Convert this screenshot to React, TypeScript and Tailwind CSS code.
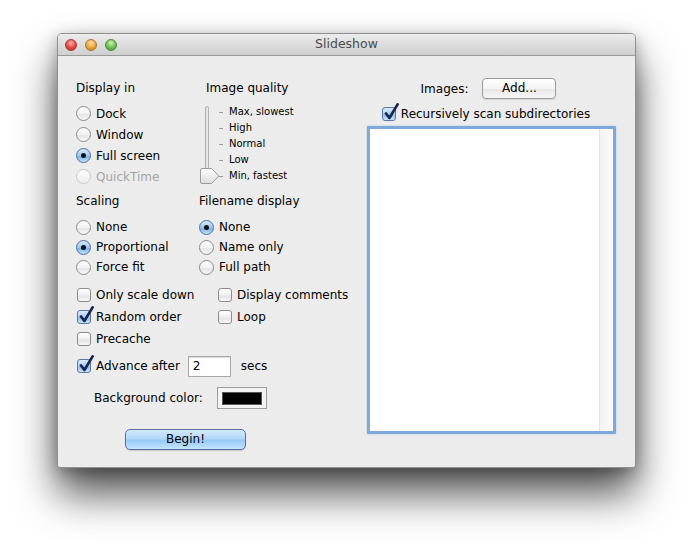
import React from "react";

function Radio({ label, checked, disabled }: { label: string; checked?: boolean; disabled?: boolean }) {
  return (
    <div className="flex items-center gap-[5px]">
      <span
        className={
          "w-[15px] h-[15px] rounded-full flex items-center justify-center border " +
          (checked
            ? "border-[#4f6da0] bg-[linear-gradient(#dbeafb,#9cc6f0_50%,#7fb4ea_60%,#c4e1fb)]"
            : disabled
            ? "border-[#c8c8c8] bg-[linear-gradient(#fbfbfb,#efefef)]"
            : "border-[#8a8a8a] bg-[linear-gradient(#ffffff,#f2f2f2_50%,#e4e4e4_60%,#fafafa)]")
        }
      >
        {checked && <span className="w-[5px] h-[5px] rounded-full bg-[#111]" />}
      </span>
      <span className={disabled ? "text-[#a4a4a4]" : "text-black"}>{label}</span>
    </div>
  );
}

function Check({ label, checked }: { label: string; checked?: boolean }) {
  return (
    <div className="flex items-center gap-[5px]">
      <span
        className={
          "relative w-[14px] h-[14px] rounded-[3px] border " +
          (checked
            ? "border-[#5b78a8] bg-[linear-gradient(#dcebfb,#a9cdf2_50%,#93bfec_60%,#cde5fb)]"
            : "border-[#8c8c8c] bg-[linear-gradient(#ffffff,#f0f0f0_50%,#e4e4e4_60%,#f8f8f8)]")
        }
      >
        {checked && (
          <svg className="absolute left-[1px] -top-[5px] w-[15px] h-[18px]" viewBox="0 0 15 18">
            <path d="M2 10.5 L5.4 15 L13.6 1.4" fill="none" stroke="#1b2552" strokeWidth={2.7} strokeLinecap="round" strokeLinejoin="round" />
          </svg>
        )}
      </span>
      <span>{label}</span>
    </div>
  );
}

function QualitySlider() {
  const levels = ["Max, slowest", "High", "Normal", "Low", "Min, fastest"];
  return (
    <div className="flex mt-[8px]">
      <div className="relative w-[19px] h-[80px]">
        <div className="absolute left-[5px] top-[2px] w-[4px] h-[72px] rounded-full border border-[#b4b4b4] bg-[linear-gradient(90deg,#d6d6d6,#f4f4f4)]" />
        <svg className="absolute left-0 top-[64px] w-[20px] h-[16px]" viewBox="0 0 20 16">
          <defs>
            <linearGradient id="thumb" x1="0" y1="0" x2="0" y2="1">
              <stop offset="0" stopColor="#ffffff" />
              <stop offset="1" stopColor="#dcdcdc" />
            </linearGradient>
          </defs>
          <path d="M2 0.5 H11.5 L18.8 8 L11.5 15.5 H2 Q0.5 15.5 0.5 14 V2 Q0.5 0.5 2 0.5 Z" fill="url(#thumb)" stroke="#9c9c9c" />
        </svg>
      </div>
      <div className="flex flex-col">
        {levels.map((l) => (
          <div key={l} className="h-[16px] flex items-center">
            <span className="w-[4px] h-px bg-[#9a9a9a]" />
            <span className="ml-[6px] text-[10px] leading-[16px]">{l}</span>
          </div>
        ))}
      </div>
    </div>
  );
}

export default function App() {
  return (
    <div className="min-h-[547px] bg-white pt-[33px] pl-[57px] font-['DejaVu_Sans',sans-serif] text-[12px] text-black">
      <div className="w-[579px] h-[435px] bg-[#ececec] border border-[#8f8f8f] rounded-t-[5px] rounded-b-[3px] shadow-[0_26px_42px_rgba(0,0,0,0.68),0_4px_16px_rgba(0,0,0,0.28)] flex flex-col overflow-hidden">
        {/* title bar */}
        <div className="relative h-[22px] border-b border-[#9a9a9a] bg-[linear-gradient(#ececec,#dadada_60%,#cfcfcf)] flex items-center">
          <div className="flex gap-[8px] pl-[7px]">
            <span className="w-[12px] h-[12px] rounded-full border border-[#a33b36] bg-[radial-gradient(circle_at_50%_30%,#ffb3ad,#e5463e_55%,#b52a22)]" />
            <span className="w-[12px] h-[12px] rounded-full border border-[#a9762a] bg-[radial-gradient(circle_at_50%_30%,#ffe3a6,#eba33a_55%,#c27b18)]" />
            <span className="w-[12px] h-[12px] rounded-full border border-[#4e8a35] bg-[radial-gradient(circle_at_50%_30%,#cff3b5,#6cbf4c_55%,#3f8f28)]" />
          </div>
          <span className="absolute inset-x-0 text-center text-[12.5px] text-[#4a4a4a] pointer-events-none">Slideshow</span>
        </div>

        {/* body */}
        <div className="flex pl-[18px] pr-[19px] pt-[22px]">
          {/* left side */}
          <div className="w-[291px] flex flex-col pt-[2px]">
            <div className="flex">
              <div className="w-[124px]">
                <div className="h-[16px] leading-[16px]">Display in</div>
                <div className="mt-[7px] flex flex-col">
                  <div className="h-[21px] flex items-center"><Radio label="Dock" /></div>
                  <div className="h-[21px] flex items-center"><Radio label="Window" /></div>
                  <div className="h-[21px] flex items-center"><Radio label="Full screen" checked /></div>
                  <div className="h-[21px] flex items-center"><Radio label="QuickTime" disabled /></div>
                </div>
              </div>
              <div className="flex flex-col">
                <div className="h-[16px] leading-[16px] pl-[6px]">Image quality</div>
                <QualitySlider />
              </div>
            </div>

            <div className="flex mt-[6px]">
              <div className="w-[123px]">
                <div className="h-[16px] leading-[16px]">Scaling</div>
                <div className="mt-[8px] flex flex-col">
                  <div className="h-[20px] flex items-center"><Radio label="None" /></div>
                  <div className="h-[20px] flex items-center"><Radio label="Proportional" checked /></div>
                  <div className="h-[20px] flex items-center"><Radio label="Force fit" /></div>
                </div>
              </div>
              <div>
                <div className="h-[16px] leading-[16px]">Filename display</div>
                <div className="mt-[8px] flex flex-col">
                  <div className="h-[20px] flex items-center"><Radio label="None" checked /></div>
                  <div className="h-[20px] flex items-center"><Radio label="Name only" /></div>
                  <div className="h-[20px] flex items-center"><Radio label="Full path" /></div>
                </div>
              </div>
            </div>

            <div className="flex mt-[7px] pl-px">
              <div className="w-[141px] flex flex-col">
                <div className="h-[22px] flex items-center"><Check label="Only scale down" /></div>
                <div className="h-[22px] flex items-center"><Check label="Random order" checked /></div>
                <div className="h-[22px] flex items-center"><Check label="Precache" /></div>
              </div>
              <div className="flex flex-col">
                <div className="h-[22px] flex items-center"><Check label="Display comments" /></div>
                <div className="h-[22px] flex items-center"><Check label="Loop" /></div>
              </div>
            </div>

            <div className="mt-[5px] h-[22px] flex items-center pl-px">
              <Check label="Advance after" checked />
              <div className="ml-[8px] w-[43px] h-[21px] bg-white border border-[#a9a9a9] shadow-[inset_0_1px_1px_rgba(0,0,0,0.15)] pl-[4px] leading-[19px]">2</div>
              <span className="ml-[10px]">secs</span>
            </div>

            <div className="mt-[10px] h-[22px] flex items-center pl-[18px]">
              <span>Background color:</span>
              <div className="ml-[14px] w-[50px] h-[22px] border border-[#9c9c9c] bg-[#f3f3f3] flex items-center justify-center">
                <div className="w-[40px] h-[13px] bg-black border border-[#555]" />
              </div>
            </div>

            <button className="mt-[20px] ml-[49px] w-[121px] h-[21px] rounded-[5px] border border-[#5d6c9e] bg-[linear-gradient(#d4e9fc,#b3d8fa_45%,#95c9f6_55%,#c4e5ff)] shadow-[0_1px_1px_rgba(0,0,0,0.15)] text-[12px] leading-[19px] text-black">
              Begin!
            </button>
          </div>

          {/* right side */}
          <div className="w-[249px] flex flex-col items-center">
            <div className="flex items-center pr-[6px]">
              <span>Images:</span>
              <button className="ml-[14px] w-[74px] h-[21px] rounded-[4px] border border-[#9b9b9b] bg-[linear-gradient(#ffffff,#f4f4f4_50%,#e8e8e8_55%,#f6f6f6)] shadow-[0_1px_1px_rgba(0,0,0,0.1)] text-[12px] leading-[19px]">
                Add...
              </button>
            </div>
            <div className="mt-[5px] h-[20px] flex items-center pr-[11px]">
              <Check label="Recursively scan subdirectories" checked />
            </div>
            <div className="mt-[2px] w-full h-[308px] border-[3px] border-[#7eaad9] rounded-[1px] shadow-[0_0_2px_#9fc2e8] bg-white flex">
              <div className="flex-1" />
              <div className="w-[14px] border-l border-[#e3e3e3] bg-[linear-gradient(90deg,#f2f2f2,#fbfbfb)]" />
            </div>
          </div>
        </div>
      </div>
    </div>
  );
}
